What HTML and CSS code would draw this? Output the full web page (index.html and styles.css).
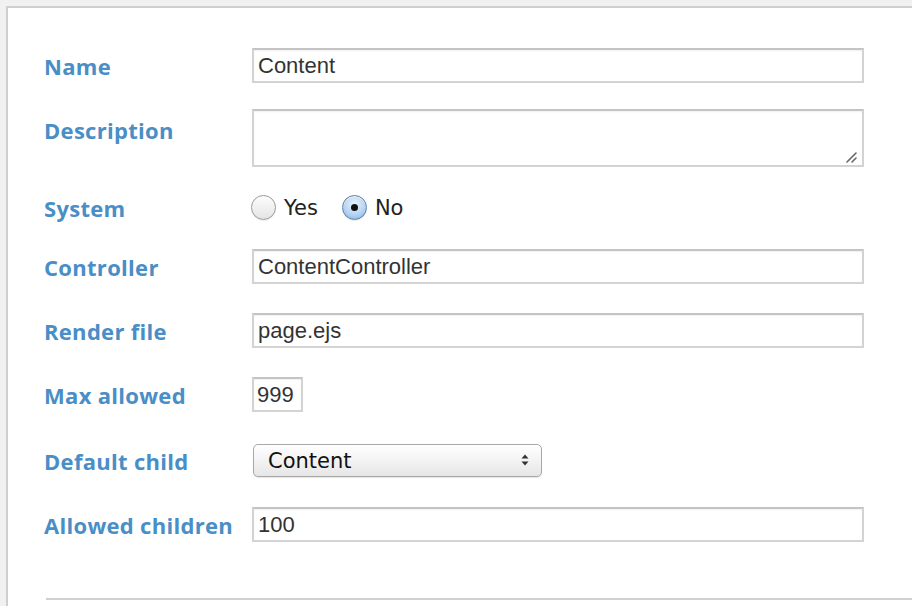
FILE: index.html
```html
<!DOCTYPE html>
<html>
<head>
<meta charset="utf-8">
<link rel="stylesheet" href="styles.css">
</head>
<body>
<div class="panel">
  <form class="form">
    <div class="row row-first">
      <label class="label">Name</label>
      <input class="field wide" type="text" value="Content">
    </div>
    <div class="row row-top">
      <label class="label">Description</label>
      <textarea class="field wide area"></textarea>
      <svg class="grip" width="12" height="12" viewBox="0 0 12 12"><path d="M2 11 L11 2 M7 11 L11 7" stroke="#666" stroke-width="1.6" stroke-linecap="round"/></svg>
    </div>
    <div class="row row-radio">
      <label class="label">System</label>
      <div class="radios">
        <label class="opt"><input class="radio" type="radio" name="sys"><span>Yes</span></label>
        <label class="opt"><input class="radio" type="radio" name="sys" checked><span>No</span></label>
      </div>
    </div>
    <div class="row">
      <label class="label">Controller</label>
      <input class="field wide" type="text" value="ContentController">
    </div>
    <div class="row">
      <label class="label">Render file</label>
      <input class="field wide" type="text" value="page.ejs">
    </div>
    <div class="row">
      <label class="label">Max allowed</label>
      <input class="field small" type="text" value="999">
    </div>
    <div class="row row-select">
      <label class="label">Default child</label>
      <div class="select-wrap">
        <select class="select"><option>Content</option></select>
        <svg class="arrows" width="10" height="14" viewBox="0 0 10 14"><path d="M1.5 5.5 L5 1.5 L8.5 5.5 Z M1.5 8.5 L5 12.5 L8.5 8.5 Z" fill="#333"/></svg>
      </div>
    </div>
    <div class="row">
      <label class="label">Allowed children</label>
      <input class="field wide" type="text" value="100">
    </div>
    <hr class="rule">
  </form>
</div>
</body>
</html>
```
FILE: styles.css
```css
html, body {
  margin: 0;
  padding: 0;
}
body {
  background: #f1f1f1;
  width: 912px;
  height: 606px;
  overflow: hidden;
}
.panel {
  margin: 6px 0 0 6px;
  background: #fff;
  border-left: 2px solid #cfcfcf;
  border-top: 2px solid #cfcfcf;
  height: 620px;
}
.form {
  padding: 40px 0 0 36px;
}
.row {
  display: flex;
  align-items: center;
  height: 35px;
  margin-bottom: 29px;
  position: relative;
}
.row-first {
  margin-bottom: 26px;
}
.label {
  width: 208px;
  flex: none;
  font-family: "Open Sans", sans-serif;
  font-weight: 700;
  font-size: 22px;
  letter-spacing: 0.3px;
  color: #4a8ec6;
}
.field {
  box-sizing: border-box;
  height: 35px;
  border: 2px solid #d3d3d3;
  border-top-color: #c4c4c4;
  box-shadow: inset 0 1px 2px rgba(0,0,0,0.06);
  font-family: "Liberation Sans", Arial, sans-serif;
  font-size: 22px;
  color: #333;
  padding: 0 4px;
  margin: 0;
  outline: none;
  background: #fff;
}
.wide {
  width: 612px;
}
.small {
  width: 51px;
  padding: 0 3px;
}
.row-top {
  height: 58px;
  align-items: flex-start;
  margin-bottom: 0;
}
.row-top .label {
  line-height: 30px;
  padding-top: 6px;
}
.area {
  height: 58px;
  resize: none;
}
.grip {
  position: absolute;
  left: 801px;
  top: 42px;
}
.row-radio {
  margin-top: 23px;
  margin-bottom: 24px;
}
.radios {
  display: flex;
  align-items: center;
  gap: 24px;
  margin-left: -1px;
}
.opt {
  display: flex;
  align-items: center;
  font-family: "DejaVu Sans", sans-serif;
  font-size: 21px;
  color: #222;
}
.radio {
  appearance: none;
  -webkit-appearance: none;
  width: 25px;
  height: 25px;
  margin: 0 8px 0 0;
  border-radius: 50%;
  border: 1px solid #9a9a9a;
  background: linear-gradient(#fdfdfd, #e4e4e4);
  box-shadow: inset 0 1px 1px rgba(255,255,255,0.8), 0 1px 1px rgba(0,0,0,0.08);
  position: relative;
}
.radio:checked {
  border-color: #5a7fa8;
  background: radial-gradient(circle at 50% 35%, #eaf4fd 0%, #b6d5f2 55%, #7fb2e2 100%);
}
.radio:checked::after {
  content: "";
  position: absolute;
  left: 50%;
  top: 50%;
  width: 7px;
  height: 7px;
  margin: -3.5px 0 0 -3.5px;
  border-radius: 50%;
  background: #111;
}
.row-select {
  height: 33px;
  margin-top: 32px;
  margin-bottom: 30px;
}
.select-wrap {
  position: relative;
  margin-left: 1px;
}
.select {
  appearance: none;
  -webkit-appearance: none;
  box-sizing: border-box;
  width: 289px;
  height: 33px;
  border: 1px solid #a8a8a8;
  border-radius: 5px;
  background: linear-gradient(#ffffff, #f3f3f3 50%, #e6e6e6);
  box-shadow: 0 1px 1px rgba(0,0,0,0.1);
  font-family: "DejaVu Sans", sans-serif;
  font-size: 21px;
  color: #111;
  padding: 0 14px;
  outline: none;
}
.arrows {
  position: absolute;
  right: 12px;
  top: 9px;
}
.rule {
  border: none;
  border-top: 2px solid #d0d0d0;
  margin: 56px 0 0 2px;
}
```
